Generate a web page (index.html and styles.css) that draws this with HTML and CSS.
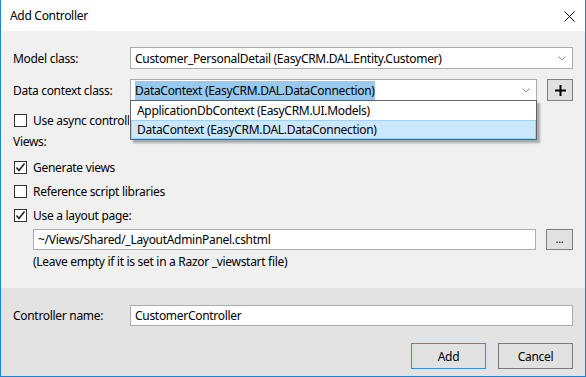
FILE: index.html
```html
<!DOCTYPE html>
<html>
<head>
<meta charset="utf-8">
<link rel="stylesheet" href="styles.css">
</head>
<body>
<div class="dialog">
  <div class="titlebar">
    <span class="title">Add Controller</span>
    <svg class="close" width="11" height="11" viewBox="0 0 11 11"><path d="M0.5 0.5 L10.5 10.5 M10.5 0.5 L0.5 10.5" stroke="#000" stroke-width="1" fill="none"/></svg>
  </div>
  <div class="content">
    <div class="row">
      <label class="lbl">Model class:</label>
      <div class="combo grow">
        <span class="combo-text">Customer_PersonalDetail (EasyCRM.DAL.Entity.Customer)</span>
        <svg class="chev" width="8" height="5" viewBox="0 0 8 5"><path d="M0.5 0.5 L4 4 L7.5 0.5" stroke="#888" fill="none"/></svg>
      </div>
    </div>
    <div class="row row2">
      <label class="lbl">Data context class:</label>
      <div class="combo dc">
        <span class="combo-text"><span class="sel">DataContext (EasyCRM.DAL.DataConnection)</span></span>
        <svg class="chev" width="8" height="5" viewBox="0 0 8 5"><path d="M0.5 0.5 L4 4 L7.5 0.5" stroke="#888" fill="none"/></svg>
        <div class="dropdown">
          <div class="opt">ApplicationDbContext (EasyCRM.UI.Models)</div>
          <div class="opt hot">DataContext (EasyCRM.DAL.DataConnection)</div>
        </div>
      </div>
      <div class="btn sq plus">
        <svg width="11" height="11" viewBox="0 0 11 11"><path d="M5.5 0 V11 M0 5.5 H11" stroke="#000" stroke-width="2" fill="none"/></svg>
      </div>
    </div>
    <div class="check async">
      <span class="box"></span><span class="clip">Use async controller actions</span>
    </div>
    <div class="section">Views:</div>
    <div class="check gen">
      <span class="box on"><svg width="11" height="11" viewBox="0 0 11 11"><path d="M1.5 5.5 L4 8.5 L9.5 1.5" stroke="#222" stroke-width="1.6" fill="none"/></svg></span><span>Generate views</span>
    </div>
    <div class="check ref">
      <span class="box"></span><span>Reference script libraries</span>
    </div>
    <div class="check lay">
      <span class="box on"><svg width="11" height="11" viewBox="0 0 11 11"><path d="M1.5 5.5 L4 8.5 L9.5 1.5" stroke="#222" stroke-width="1.6" fill="none"/></svg></span><span>Use a layout page:</span>
    </div>
    <div class="row layout-row">
      <div class="textbox grow">~/Views/Shared/_LayoutAdminPanel.cshtml</div>
      <div class="btn sq dots">...</div>
    </div>
    <div class="hint">(Leave empty if it is set in a Razor _viewstart file)</div>
  </div>
  <div class="footer">
    <div class="row">
      <label class="lbl">Controller name:</label>
      <div class="textbox grow">CustomerController</div>
    </div>
    <div class="buttons">
      <div class="btn wide default">Add</div>
      <div class="btn wide cancel">Cancel</div>
    </div>
  </div>
</div>
</body>
</html>
```

FILE: styles.css
```css
* { box-sizing: border-box; }
html, body { margin: 0; padding: 0; }
body {
  width: 586px;
  height: 377px;
  overflow: hidden;
  font-family: "Noto Sans", "Open Sans", sans-serif;
  font-size: 12px;
  letter-spacing: -0.3px;
  color: #000;
  background: #fff;
}
.dialog {
  width: 586px;
  height: 377px;
  border: 1px solid #1883d7;
  border-top: none;
  display: flex;
  flex-direction: column;
}
.titlebar {
  height: 31px;
  background: #fff;
  display: flex;
  align-items: center;
  justify-content: space-between;
  padding: 0 10px 0 9px;
}
.title { font-size: 12px; padding-bottom: 1px; }
.close { margin-top: 1px; }
.content {
  height: 257px;
  background: #f0f0f0;
  padding: 16px 12px 0 12px;
  display: flex;
  flex-direction: column;
}
.row {
  display: flex;
  align-items: center;
  height: 22px;
}
.lbl { width: 117px; flex: 0 0 117px; }
.grow { flex: 1; }
.combo {
  position: relative;
  height: 22px;
  background: #fff;
  border: 1px solid #acacac;
  display: flex;
  align-items: center;
  padding-left: 4px;
}
.combo-text { flex: 1; white-space: nowrap; }
.chev { margin-right: 6px; }
.row2 { margin-top: 10px; }
.dc { width: 407px; flex: 0 0 407px; }
.sel { background: #99c9ef; padding: 1px 0; }
.btn {
  background: #e1e1e1;
  border: 1px solid #7f7f7f;
  display: flex;
  align-items: center;
  justify-content: center;
}
.sq { width: 27px; height: 22px; margin-left: 10px; }
.dropdown {
  position: absolute;
  left: -1px;
  top: 20px;
  width: 407px;
  background: #fff;
  border: 1px solid #646464;
  box-shadow: 3px 3px 2px rgba(0,0,0,0.3);
  z-index: 5;
}
.opt {
  height: 19px;
  line-height: 18px;
  padding-left: 5px;
  white-space: nowrap;
  border: 1px solid transparent;
}
.opt.hot { background: #cce8ff; border-color: #99d1ff; }
.check {
  display: flex;
  align-items: center;
  height: 13px;
  padding-left: 1px;
}
.box {
  width: 13px;
  height: 13px;
  border: 1px solid #333;
  background: #fff;
  margin-right: 6px;
  display: flex;
  align-items: center;
  justify-content: center;
  flex: 0 0 13px;
}
.clip {
  display: block;
  width: 96px;
  overflow: hidden;
  white-space: nowrap;
}
.async { margin-top: 13px; }
.section { margin-top: 6px; line-height: 17px; }
.gen { margin-top: 11px; }
.ref { margin-top: 11px; }
.lay { margin-top: 11px; }
.layout-row { margin-top: 7px; padding-left: 20px; height: 21px; }
.textbox {
  height: 21px;
  background: #fff;
  border: 1px solid #acacac;
  padding-left: 4px;
  display: flex;
  align-items: center;
  white-space: nowrap;
}
.dots { height: 21px; font-size: 11px; padding-bottom: 3px; }
.hint { margin-top: 4px; padding-left: 20px; line-height: 16px; }
.footer {
  flex: 1;
  background: #e3e3e3;
  padding: 17px 12px 0 12px;
  display: flex;
  flex-direction: column;
}
.footer .row { height: 21px; }
.buttons {
  display: flex;
  justify-content: flex-end;
  gap: 12px;
  margin-top: 17px;
}
.wide { width: 75px; height: 26px; }
.default { border-color: #3c8de0; }
.cancel { border-color: #7a7a7a; }
```
